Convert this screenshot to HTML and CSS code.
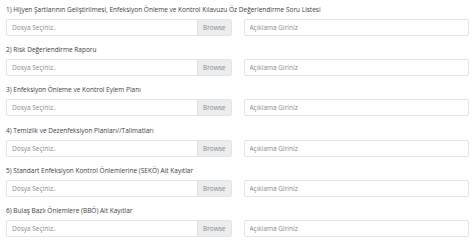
FILE: index.html
```html
<!DOCTYPE html>
<html lang="en">
<head>
  <meta charset="UTF-8">
  <meta name="viewport" content="width=device-width, initial-scale=1.0">
  <title>Dosya Yükleme</title>
  <link rel="stylesheet" href="styles.css">
</head>
<body>

  <div class="form">

    <div class="form-group">
      <label class="item-label">1) Hijyen Şartlarının Geliştirilmesi, Enfeksiyon Önleme ve Kontrol Kılavuzu Öz Değerlendirme Soru Listesi</label>
      <div class="row">
        <div class="col">
          <div class="file-input"><span class="file-name">Dosya Seçiniz..</span><span class="browse">Browse</span></div>
        </div>
        <div class="col">
          <input class="text-input" type="text" placeholder="Açıklama Giriniz">
        </div>
      </div>
    </div>

    <div class="form-group">
      <label class="item-label">2) Risk Değerlendirme Raporu</label>
      <div class="row">
        <div class="col">
          <div class="file-input"><span class="file-name">Dosya Seçiniz..</span><span class="browse">Browse</span></div>
        </div>
        <div class="col">
          <input class="text-input" type="text" placeholder="Açıklama Giriniz">
        </div>
      </div>
    </div>

    <div class="form-group">
      <label class="item-label">3) Enfeksiyon Önleme ve Kontrol Eylem Planı</label>
      <div class="row">
        <div class="col">
          <div class="file-input"><span class="file-name">Dosya Seçiniz..</span><span class="browse">Browse</span></div>
        </div>
        <div class="col">
          <input class="text-input" type="text" placeholder="Açıklama Giriniz">
        </div>
      </div>
    </div>

    <div class="form-group">
      <label class="item-label">4) Temizlik ve Dezenfeksiyon Planları//Talimatları</label>
      <div class="row">
        <div class="col">
          <div class="file-input"><span class="file-name">Dosya Seçiniz..</span><span class="browse">Browse</span></div>
        </div>
        <div class="col">
          <input class="text-input" type="text" placeholder="Açıklama Giriniz">
        </div>
      </div>
    </div>

    <div class="form-group">
      <label class="item-label">5) Standart Enfeksiyon Kontrol Önlemlerine (SEKÖ) Ait Kayıtlar</label>
      <div class="row">
        <div class="col">
          <div class="file-input"><span class="file-name">Dosya Seçiniz..</span><span class="browse">Browse</span></div>
        </div>
        <div class="col">
          <input class="text-input" type="text" placeholder="Açıklama Giriniz">
        </div>
      </div>
    </div>

    <div class="form-group">
      <label class="item-label">6) Bulaş Bazlı Önlemlere (BBÖ) Ait Kayıtlar</label>
      <div class="row">
        <div class="col">
          <div class="file-input"><span class="file-name">Dosya Seçiniz..</span><span class="browse">Browse</span></div>
        </div>
        <div class="col">
          <input class="text-input" type="text" placeholder="Açıklama Giriniz">
        </div>
      </div>
    </div>

  </div>

</body>
</html>
```

FILE: styles.css
```css
body {
  margin: 0;
  padding: 0;
  background: #fff;
  font-family: "Open Sans", "DejaVu Sans", sans-serif;
  font-size: 6.5px;
  color: #3d3d3d;
}

.form {
  padding: 5px 5px 0 6px;
}

/* One upload item: label + file field + description */
.form-group {
  margin-bottom: 9.2px;
}

.item-label {
  display: block;
  line-height: 10px;
  margin-bottom: 4px;
  white-space: nowrap;
}

.row {
  display: flex;
  gap: 12px;
}

.col {
  flex: 1;
}

/* File picker */
.file-input {
  display: flex;
  height: 17px;
  border: 1px solid #e1e4e8;
  border-radius: 2px;
  box-sizing: border-box;
  overflow: hidden;
}

.file-name {
  flex: 1;
  display: flex;
  align-items: center;
  padding-left: 5px;
  color: #858a90;
}

.browse {
  display: flex;
  align-items: center;
  padding: 0 5px;
  background: #ebedef;
  border-left: 1px solid #e1e4e8;
  color: #858a90;
}

/* Description field */
.text-input {
  display: block;
  width: 100%;
  height: 17px;
  box-sizing: border-box;
  margin: 0;
  padding: 0 5px;
  border: 1px solid #e1e4e8;
  border-radius: 2px;
  font-family: inherit;
  font-size: 6.5px;
  color: #3d3d3d;
  background: #fff;
  outline: none;
}

.text-input::placeholder {
  color: #858a90;
}
```
